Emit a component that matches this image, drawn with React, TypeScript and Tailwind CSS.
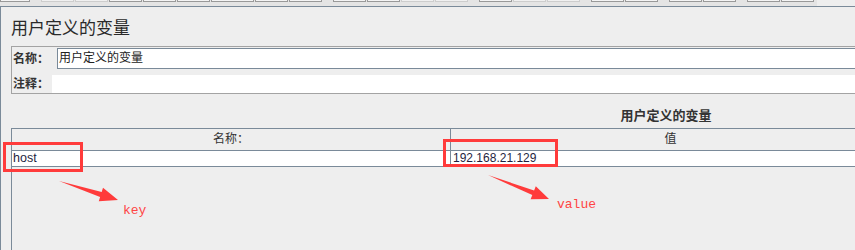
const toolGroups = [
  [{w: 'w-[30px]', light: false}],
  [
    {w: 'w-[33px]', light: true},
    {w: 'w-[33px]', light: true},
    {w: 'w-[33px]', light: false},
    {w: 'w-[33px]', light: false},
    {w: 'w-[33px]', light: false},
    {w: 'w-[43px]', light: false},
    {w: 'w-[33px]', light: false},
    {w: 'w-[33px]', light: false},
  ],
  [
    {w: 'w-[33px]', light: false},
    {w: 'w-[33px]', light: false},
    {w: 'w-[33px]', light: true},
    {w: 'w-[33px]', light: true},
  ],
  [
    {w: 'w-[33px]', light: false},
    {w: 'w-[33px]', light: true},
    {w: 'w-[33px]', light: true},
  ],
  [
    {w: 'w-[33px]', light: false},
    {w: 'w-[33px]', light: false},
  ],
  [
    {w: 'w-[33px]', light: false},
    {w: 'w-[33px]', light: false},
  ],
  [
    {w: 'w-[33px]', light: false},
    {w: 'w-[33px]', light: false},
  ],
];

const cjk = "font-['Liberation_Sans','Noto_Sans_CJK_SC',sans-serif]";

function Toolbar() {
  return (
    <div className="flex h-[6px]">
      <div className="flex h-[6px] gap-[11px] bg-[#e4e4e4] pr-[3px]">
        {toolGroups.map((group, i) => (
          <div key={i} className="flex gap-px">
            {group.map((b, j) => (
              <div
                key={j}
                className={`h-[2px] border-x border-b ${b.w} ${
                  b.light ? 'border-[#cdcdcd] bg-[#f0f0f0]' : 'border-[#999999] bg-[#f4f4f4]'
                }`}
              />
            ))}
          </div>
        ))}
      </div>
      <div className="flex-1 bg-[#eeeeee]" />
    </div>
  );
}

function Annotations() {
  return (
    <>
      <div className="absolute left-[3px] top-[142px] h-[30px] w-[80px] border-[3px] border-[#ff3b3b]" />
      <div className="absolute left-[443px] top-[139px] h-[28px] w-[115px] border-[3px] border-[#ff3b3b]" />
      <svg className="pointer-events-none absolute left-0 top-0" width="855" height="250">
        <polygon
          points="59,181 101.7,192.1 103,187.8 118,200 98.8,201.2 100.1,196.9"
          fill="#ff3b3b"
        />
        <polygon
          points="488,175 534.1,190.5 535.8,186.3 549,199 530.6,199.3 532.3,195.1"
          fill="#ff3b3b"
        />
      </svg>
      <div className="absolute left-[123px] top-[203px] font-['Liberation_Mono',monospace] text-[13px] leading-[15px] text-[#ff4444]">
        key
      </div>
      <div className="absolute left-[557px] top-[197px] font-['Liberation_Mono',monospace] text-[13px] leading-[15px] text-[#ff4444]">
        value
      </div>
    </>
  );
}

export default function App() {
  return (
    <div className={`relative h-[250px] w-[855px] overflow-hidden bg-[#eeeeee] ${cjk}`}>
      <Toolbar />
      <div className="flex h-[244px] w-[1400px] flex-col border-l border-t border-[#7a8a99]">
        <div className="pl-[10px] pt-[12px] text-[17px] leading-[20px] text-[#2a2a2a]">用户定义的变量</div>

        <div className="ml-[10px] mt-[7px] w-[1320px] border-y border-l border-[#a3a3a3] pt-px">
          <div className="flex h-[21px] items-center">
            <div className="w-[45px] pl-px text-[12px] font-bold text-[#333333]">名称：</div>
            <div className="h-[21px] flex-1 border border-[#7a8a99] bg-white pl-px text-[12px] leading-[19px] text-[#222222]">
              用户定义的变量
            </div>
          </div>
          <div className="mt-[6px] flex h-[18px] items-center">
            <div className="w-[40px] pl-px text-[12px] font-bold text-[#333333]">注释：</div>
            <div className="h-[18px] flex-1 bg-white" />
          </div>
        </div>

        <div className="mt-[14px] w-[1330px] text-center text-[13px] font-bold leading-[16px] text-[#333333]">
          用户定义的变量
        </div>

        <div className="ml-[10px] mt-[4px] w-[1320px] flex-1 border-l border-t border-[#7a8a99]">
          <div className="grid h-[22px] grid-cols-[439px_440px_440px] border-b border-[#7a8a99] text-center text-[12px] leading-[21px] text-[#333333]">
            <div className="border-r border-[#7a8a99]">名称：</div>
            <div className="border-r border-[#7a8a99]">值</div>
            <div />
          </div>
          <div className="grid h-[16px] grid-cols-[439px_440px_440px] border-b border-[#7a8a99] bg-white text-[12.5px] leading-[15px] text-[#1f1f3f]">
            <div className="border-r border-[#7a8a99] pl-px">host</div>
            <div className="border-r border-[#7a8a99] pl-[2px] text-[12px]">192.168.21.129</div>
            <div />
          </div>
        </div>
      </div>
      <Annotations />
    </div>
  );
}
